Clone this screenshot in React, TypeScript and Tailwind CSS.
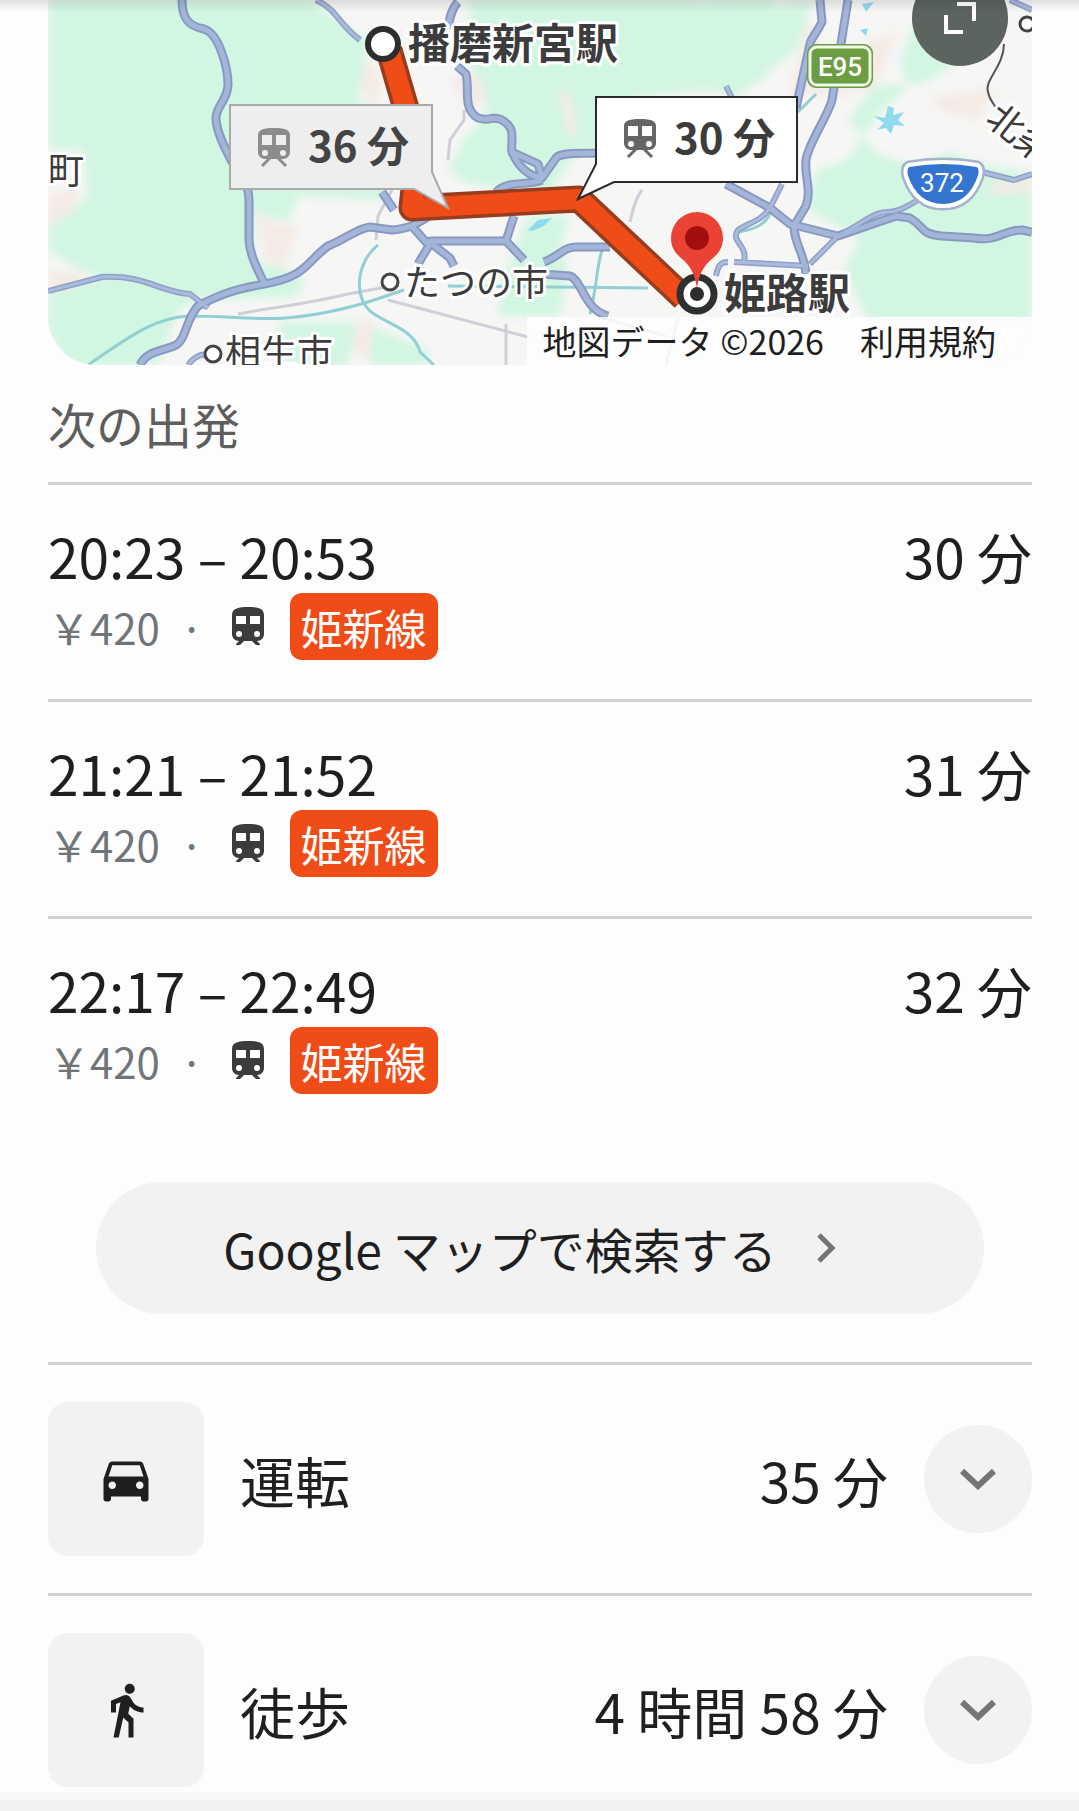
import { MdDirectionsCar, MdDirectionsWalk } from "react-icons/md";

////////////////// Data //////////////////

// \uFFE5 is the full-width yen sign
const departures = [
  { time: "20:23 – 20:53", duration: "30 分", fare: "\uFFE5420", line: "姫新線" },
  { time: "21:21 – 21:52", duration: "31 分", fare: "\uFFE5420", line: "姫新線" },
  { time: "22:17 – 22:49", duration: "32 分", fare: "\uFFE5420", line: "姫新線" },
];

const otherModes = [
  { name: "運転", duration: "35 分", Icon: MdDirectionsCar },
  { name: "徒歩", duration: "4 時間 58 分", Icon: MdDirectionsWalk },
];

const majorRoads = [
  "M134 0 C134 18 140 26 156 29 C172 34 180 70 180 84 C180 100 168 106 168 118 C168 132 178 150 184 162 C198 176 200 186 201 200 L201 240 C202 256 210 270 216 283",
  "M92 365 C98 352 110 352 126 346 C138 342 138 318 150 306 C180 290 196 288 216 284 C260 276 258 262 280 246 C296 240 310 228 322 227 L344 230 C364 228 368 224 386 213",
  "M409 66 L418 74 C422 90 414 108 430 118 C444 122 440 116 452 119 C470 128 462 140 464 152 L490 164 L494 178",
  "M464 152 C470 166 480 176 494 178 L508 158 C514 152 530 154 550 153",
  "M494 180 C480 186 460 180 448 192 M334 192 L346 210 M362 224 L378 242 L384 241 L458 241 L466 216",
  "M382 244 L370 264 M384 244 L402 258 L406 266 M458 241 L476 260",
  "M496 262 C512 256 516 246 530 247 L562 247 M494 274 L522 276 C534 280 536 310 560 316",
  "M400 28 C402 16 404 8 410 2",
  "M800 0 L784 100 C780 116 760 144 758 160 C756 176 764 190 758 206 L746 226 C746 244 756 252 758 274",
  "M678 184 L722 208 L742 224 L790 236 L848 216 L862 218 C878 228 872 234 894 236 L926 238 C950 242 954 230 974 230 L984 232",
  "M772 0 L774 22 C768 34 762 40 762 44 L748 108",
];

const minorRoads = [
  "M0 291 L54 277 C100 275 110 292 142 294 L160 308",
  "M762 264 L790 236 C820 220 826 212 840 212 C850 212 860 206 870 200 M934 172 L966 180 L984 174",
  "M734 184 L722 208 C712 222 702 222 690 230 C682 242 700 244 696 262 M686 262 L760 266",
  "M668 276 C670 264 674 262 680 262 M678 86 L686 102",
  "M268 0 C290 10 290 24 312 40",
  "M962 0 L984 10",
  "M140 365 C148 354 156 354 164 354",
];

const railLines = [
  "M190 314 C230 306 250 306 300 294 L344 286",
  "M340 300 L480 337 M458 324 L458 365 M560 320 L618 336",
  "M344 190 L330 216 L328 240",
  "M416 110 L416 120 L402 140 L400 160",
  "M594 190 C586 200 584 214 582 222 M618 365 L630 318",
];

const rivers = [
  "M40 365 C90 330 110 318 140 316 C200 316 220 324 280 312 C320 304 330 298 356 290",
  "M330 245 C308 262 304 300 326 314 C344 326 366 330 372 352 L386 365",
  "M400 286 L600 288",
  "M554 250 C548 270 550 280 542 314",
  "M750 112 L768 94 M690 232 C706 230 722 224 724 206",
];

const terrain = [
  "M0 0H260L320 40L310 100L340 120V200L250 196L240 222L206 212V260L256 276L250 296L150 300L130 310L110 365H20L0 330V292L54 278L24 266L0 250V228L26 210L40 196L34 150L0 148Z",
  "M420 0H640L710 10L764 0L750 48L690 96L660 90L586 96L578 110L560 150L530 150L500 196L460 186L420 184L400 170L416 140L440 110L424 70Z",
  "M660 0H724L736 36L700 60L720 80L660 90Z",
  "M868 20L912 60L874 84L826 86L800 120L830 154L870 168L900 152L940 166L984 174V320H820L796 270L812 240L800 232L760 210L768 170L800 160L828 116L860 86L852 60Z",
  "M230 322L310 322L300 365H240Z",
  "M480 216H520L512 250L520 268L512 316H450L456 280Z",
  "M322 326L380 350L380 365H322Z",
];

const sand = [
  "M0 196L32 186L26 210L0 226Z",
  "M208 212L226 224L250 226L236 270L216 258Z",
  "M320 56L334 82L326 110L312 84Z",
  "M0 270L40 274L24 290L0 288Z",
  "M400 80L430 74L440 100L420 110Z",
  "M510 84L524 100L530 140L518 130Z",
  "M760 20L780 60L850 30L828 86L790 96L740 96Z",
  "M880 98L946 88L930 120L896 112Z",
  "M936 186L984 176V190L950 196Z",
  "M306 326L326 316L322 360L306 350Z",
];

////////////////// Icons //////////////////

type IconProps = { className?: string };

const TrainIcon = ({ className }: IconProps) => (
  <svg viewBox="0 0 32 39" fill="currentColor" className={className} aria-hidden="true">
    <path
      fillRule="evenodd"
      d="M16 0C7 0 0 1 0 8V27C0 31 3 34 7 34L4 37V38H8L12 34H20L24 38H28V37L25 34C29 34 32 31 32 27V8C32 1 25 0 16 0ZM4 9H14V17H4ZM18 9H28V17H18ZM7 24A3 3 0 1 0 7 30A3 3 0 1 0 7 24ZM25 24A3 3 0 1 0 25 30A3 3 0 1 0 25 24Z"
    />
  </svg>
);

const ChevronDown = () => (
  <svg viewBox="0 0 36 22" fill="none" stroke="#757575" strokeWidth="6" className="w-9" aria-hidden="true">
    <path d="M2 3L18 18L34 3" />
  </svg>
);

const ChevronRight = () => (
  <svg viewBox="0 0 20 30" fill="none" stroke="#757575" strokeWidth="5" className="w-5" aria-hidden="true">
    <path d="M2 2L15 15L2 28" />
  </svg>
);

// train drawn inside the map callouts
const CalloutTrain = ({ x, y, color }: { x: number; y: number; color: string }) => (
  <g transform={`translate(${x} ${y})`} fill={color}>
    <path
      fillRule="evenodd"
      d="M16 0C7 0 0 1 0 7V24C0 28 3 31 7 31H25C29 31 32 28 32 24V7C32 1 25 0 16 0ZM4 7H14V17H4ZM18 7H28V17H18ZM7 22A3 3 0 1 0 7 28A3 3 0 1 0 7 22ZM25 22A3 3 0 1 0 25 28A3 3 0 1 0 25 22Z"
    />
    <path d="M12 30L4 38M20 30L28 38" stroke={color} strokeWidth="3" fill="none" />
  </g>
);

////////////////// Map //////////////////

const RouteMap = () => (
  <div className="relative h-[365px] overflow-hidden rounded-b-[48px] bg-[#f5f5f5]">
    <svg
      viewBox="0 0 984 365"
      preserveAspectRatio="xMidYMid slice"
      className="h-full w-full font-['Noto_Sans_CJK_JP',sans-serif]"
      role="img"
      aria-label="播磨新宮駅 姫路駅"
    >
      <defs>
        <filter id="soft">
          <feGaussianBlur stdDeviation="4" />
        </filter>
      </defs>
      <rect width="984" height="365" fill="#f6f6f5" />
      <g filter="url(#soft)">
        {terrain.map((d) => (
          <path key={d} d={d} fill="#d1f6e1" />
        ))}
        {sand.map((d) => (
          <path key={d} d={d} fill="#f4ebe4" />
        ))}
      </g>
      {railLines.map((d) => (
        <path key={d} d={d} fill="none" stroke="#cfcfd8" strokeWidth="3" />
      ))}
      {rivers.map((d) => (
        <path key={d} d={d} fill="none" stroke="#90d0d4" strokeWidth="3" />
      ))}
      {minorRoads.map((d) => (
        <path key={d} d={d} fill="none" stroke="#909fc8" strokeWidth="6" strokeLinejoin="round" />
      ))}
      {majorRoads.map((d) => (
        <path key={d} d={d} fill="none" stroke="#8898c4" strokeWidth="9" strokeLinejoin="round" />
      ))}
      {minorRoads.map((d) => (
        <path key={d} d={d} fill="none" stroke="#aabcdc" strokeWidth="3" strokeLinejoin="round" />
      ))}
      {majorRoads.map((d) => (
        <path key={d} d={d} fill="none" stroke="#a3b6d8" strokeWidth="5" strokeLinejoin="round" />
      ))}
      <path
        d="M826 116L837 118L840 106L846 108L845 115L856 112L850 120L857 126L846 125L843 134L838 128L829 130L836 123ZM480 230L490 220L504 218L496 226L484 231ZM814 4L826 2L818 12ZM812 30L820 28L818 36Z"
        fill="#90daee"
      />
      <path d="M956 44C956 66 936 80 940 92C942 102 948 106 952 114" fill="none" stroke="#555" strokeWidth="2" />

      {/* Route */}
      <path d="M341 50L370 150L364 208L531 199L636 298" fill="none" stroke="#963c1f" strokeWidth="27" strokeLinejoin="round" />
      <path d="M341 50L370 150L364 208L531 199L636 298" fill="none" stroke="#f04c17" strokeWidth="20" strokeLinejoin="round" />

      {/* Road shields */}
      <rect x="759" y="44" width="66" height="44" rx="9" fill="#6d9d43" />
      <rect x="762" y="47" width="60" height="38" rx="7" fill="#6d9d43" stroke="#f1fbe9" strokeWidth="3" />
      <text x="792" y="76" fontSize="26" fontWeight="500" textAnchor="middle" fill="#fff" fontFamily="Roboto">
        E95
      </text>
      <path d="M861 165Q895 159 929 165Q934 167 932 176Q922 206 895 206Q868 206 858 176Q856 167 861 165Z" fill="#3375cf" stroke="#a4b2cc" strokeWidth="9" />
      <path d="M861 165Q895 159 929 165Q934 167 932 176Q922 206 895 206Q868 206 858 176Q856 167 861 165Z" fill="#3375cf" stroke="#fff" strokeWidth="4" />
      <text x="894" y="192" fontSize="26" textAnchor="middle" fill="#fff" fontFamily="Roboto">
        372
      </text>

      {/* Place names */}
      <g fill="#3c3c3c" stroke="#fff" strokeWidth="6" strokeLinejoin="round" paintOrder="stroke">
        <text x="0" y="184" fontSize="36">町</text>
        <text x="177" y="366" fontSize="36">相生市</text>
        <text x="356" y="296" fontSize="36">たつの市</text>
        <text x="936" y="122" fontSize="36" transform="rotate(38 936 122)">北条</text>
        <text x="360" y="59" fontSize="42" fontWeight="700">播磨新宮駅</text>
        <text x="676" y="309" fontSize="42" fontWeight="700">姫路駅</text>
      </g>
      <circle cx="165" cy="354" r="8" fill="#fff" stroke="#444" strokeWidth="3" />
      <circle cx="342" cy="282" r="8" fill="#fff" stroke="#444" strokeWidth="3" />
      <circle cx="979" cy="24" r="7" fill="#fff" stroke="#444" strokeWidth="3" />

      {/* Endpoints */}
      <circle cx="335" cy="44" r="15" fill="#fff" stroke="#2d2d2d" strokeWidth="6" />
      <circle cx="649" cy="294" r="17" fill="#fff" stroke="#2d3030" strokeWidth="7" />
      <circle cx="649" cy="294" r="7" fill="#2d2d2d" />
      <path d="M649 288C646 270 640 264 633 258C626 252 623 246 623 238A26 26 0 0 1 675 238C675 246 672 252 665 258C658 264 652 270 649 288Z" fill="#ea4335" />
      <circle cx="649" cy="238" r="12" fill="#a50e0e" />

      {/* Duration callouts */}
      <path d="M182 105H384V172L400 208L366 189H182Z" fill="#eee" stroke="#aaa" strokeWidth="2" />
      <CalloutTrain x={210} y={128} color="#8c8c8c" />
      <text x="260" y="162" fontSize="42" fontWeight="700" fill="#444">36 分</text>
      <path d="M548 97H749V182H566L530 199L548 164Z" fill="#fff" stroke="#2b2b2b" strokeWidth="2" />
      <CalloutTrain x={576} y={119} color="#666" />
      <text x="626" y="154" fontSize="42" fontWeight="700" fill="#3c3c3c">30 分</text>
    </svg>

    <button
      type="button"
      aria-label="地図を拡大"
      className="absolute -top-[30px] right-6 flex h-24 w-24 items-center justify-center rounded-full bg-[#5b645f]"
    >
      <svg viewBox="0 0 32 32" fill="none" stroke="#fff" strokeWidth="4" className="w-8" aria-hidden="true">
        <path d="M13 2H30V19M2 13V30H19" />
      </svg>
    </button>

    <div className="absolute right-0 bottom-0 flex h-12 items-center gap-9 bg-white/80 pr-9 pl-4 text-[34px] leading-none text-[#1f1f1f]">
      <span>地図データ ©2026</span>
      <a href="#terms">利用規約</a>
    </div>
  </div>
);

////////////////// Departures //////////////////

const DepartureList = () => (
  <section>
    <h2 className="py-[22px] text-[48px] leading-[73px] text-[#5e5e5e]">次の出発</h2>
    <ul>
      {departures.map((item) => (
        <li key={item.time} className="border-t-[3px] border-[#d2d2d2] pt-8 pb-[39px]">
          <div className="flex items-center justify-between text-[55px] leading-[76px]">
            <span>{item.time}</span>
            <span>{item.duration}</span>
          </div>
          <div className="flex h-[67px] items-center text-[42px] text-[#70757a]">
            <span>{item.fare}</span>
            <span className="mr-7 ml-5">·</span>
            <TrainIcon className="mr-[26px] w-8 text-[#3c3c3c]" />
            <span className="rounded-xl bg-[#f04c17] px-[11px] leading-[67px] text-white">{item.line}</span>
          </div>
        </li>
      ))}
    </ul>
  </section>
);

////////////////// Other modes //////////////////

const ModeList = () => (
  <ul className="mt-12">
    {otherModes.map(({ name, duration, Icon }) => (
      <li key={name} className="flex items-center gap-9 border-t-[3px] border-[#d2d2d2] py-[37px] text-[55px] leading-[76px] last:pb-[5px]">
        <div className="flex h-[154px] w-[156px] items-center justify-center rounded-[20px] bg-[#f2f2f2]">
          <Icon size={60} />
        </div>
        <span>{name}</span>
        <span className="ml-auto">{duration}</span>
        <button
          type="button"
          aria-label={name}
          className="flex h-[108px] w-[108px] items-center justify-center rounded-full bg-[#f2f2f2]"
        >
          <ChevronDown />
        </button>
      </li>
    ))}
  </ul>
);

export default function App() {
  return (
    <div className="relative bg-[#fdfdfd] font-['Noto_Sans_CJK_JP',sans-serif] text-[#1f1f1f]">
      <div className="absolute inset-x-0 top-0 z-10 h-3 border-t border-black/10 bg-linear-to-b from-black/10 to-transparent"></div>
      <main className="pr-[47px] pl-12">
        <RouteMap />
        <DepartureList />
        <a
          href="#maps"
          className="mx-12 mt-[49px] flex h-[132px] items-center justify-center gap-10 rounded-full bg-[#f2f2f2] pr-5 text-[48px]"
        >
          <span>Google マップで検索する</span>
          <ChevronRight />
        </a>
        <ModeList />
      </main>
      {/* top edge of the next section */}
      <div className="h-[19px] border-t-8 border-[#f8f8f8] bg-[#f2f2f2]"></div>
    </div>
  );
}
